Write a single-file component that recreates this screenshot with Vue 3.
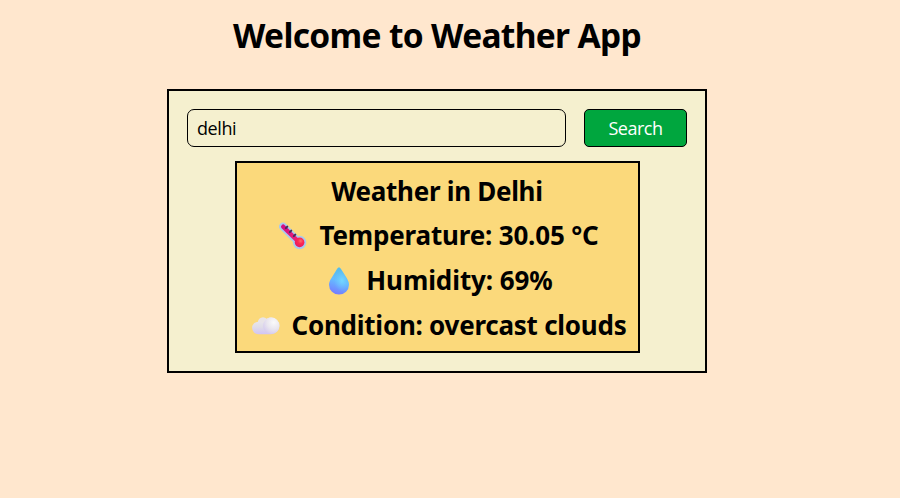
<script setup>
import { ref } from 'vue'

const city = ref('delhi')
</script>

<template>
  <main class="page">
    <h1 class="title">Welcome to Weather App</h1>
    <section class="card">
      <form class="search" @submit.prevent>
        <input v-model="city" class="field" type="text" aria-label="City" />
        <button class="button" type="submit">Search</button>
      </form>
      <div class="result">
        <h2 class="row heading"><span class="text">Weather in Delhi</span></h2>
        <h2 class="row reading temperature">
          <svg class="icon" viewBox="0 0 28 28">
            <defs>
              <linearGradient id="tube" x1="0" y1="0" x2="1" y2="1">
                <stop offset="0" stop-color="#d30f83" />
                <stop offset="1" stop-color="#ed2274" />
              </linearGradient>
              <radialGradient id="bulb" cx=".6" cy=".35" r=".7">
                <stop offset="0" stop-color="#ff6970" />
                <stop offset=".4" stop-color="#fc2951" />
                <stop offset="1" stop-color="#e51765" />
              </radialGradient>
            </defs>
            <path d="M4 4.6 L20 20.5" stroke="#a9c9ef" stroke-width="7.8" stroke-linecap="round" />
            <circle cx="20.6" cy="20.5" r="6.7" fill="#a9c9ef" />
            <path d="M4.2 4.7 L19 19.3" stroke="url(#tube)" stroke-width="4.4" stroke-linecap="round" />
            <circle cx="20.6" cy="20.4" r="4.8" fill="url(#bulb)" />
            <path d="M8.3 4.6 L6.8 6.1 M12.3 8.6 L10.8 10.1 M16.3 12.6 L14.8 14.1" stroke="#432f5c" stroke-width="2" stroke-linecap="round" />
          </svg>
          <span class="text">Temperature: 30.05 °C</span>
        </h2>
        <h2 class="row reading humidity">
          <svg class="icon" viewBox="0 0 28 28">
            <defs>
              <linearGradient id="drop" x1=".65" y1="0" x2=".4" y2="1">
                <stop offset="0" stop-color="#53bde9" />
                <stop offset=".5" stop-color="#65bcff" />
                <stop offset="1" stop-color="#757cff" />
              </linearGradient>
              <radialGradient id="shine" cx=".65" cy=".48" r=".4">
                <stop offset="0" stop-color="#78dcff" stop-opacity=".85" />
                <stop offset="1" stop-color="#70caff" stop-opacity="0" />
              </radialGradient>
            </defs>
            <path d="M14 .5 C13 .5 12.5 1.1 12 2 L6.2 11.5 C4.8 13.7 4 15.6 4 17.7 A10 9.8 0 0 0 24 17.7 C24 15.6 23.1 13.5 21.8 11.3 L16 2 C15.5 1.1 15 .5 14 .5Z" fill="url(#drop)" />
            <path d="M14 .5 C13 .5 12.5 1.1 12 2 L6.2 11.5 C4.8 13.7 4 15.6 4 17.7 A10 9.8 0 0 0 24 17.7 C24 15.6 23.1 13.5 21.8 11.3 L16 2 C15.5 1.1 15 .5 14 .5Z" fill="url(#shine)" />
          </svg>
          <span class="text">Humidity: 69%</span>
        </h2>
        <h2 class="row reading condition">
          <svg class="icon" viewBox="0 0 28 28">
            <defs>
              <linearGradient id="base" x1="0" y1="0" x2="0" y2="1">
                <stop offset="0" stop-color="#eeeaf0" />
                <stop offset=".55" stop-color="#e0dde8" />
                <stop offset="1" stop-color="#d1c4f5" />
              </linearGradient>
              <radialGradient id="puff" cx=".65" cy=".3" r=".75">
                <stop offset="0" stop-color="#fafafa" />
                <stop offset=".55" stop-color="#e9e6ef" />
                <stop offset="1" stop-color="#d5cbee" />
              </radialGradient>
            </defs>
            <circle cx="11" cy="10.5" r="5.2" fill="#e8e4e8" />
            <path d="M6.3 9.7 A6.1 6.1 0 0 0 6.5 22.3 H19 A8.3 8.3 0 0 0 19 5.6 C15.4 5.6 12.3 8 11.5 11.7 C10 10 8.2 9.5 6.3 9.7Z" fill="url(#base)" />
            <circle cx="19.3" cy="13.7" r="8.2" fill="url(#puff)" />
          </svg>
          <span class="text">Condition: overcast clouds</span>
        </h2>
      </div>
    </section>
  </main>
</template>

<style>
body {
  background: #ffe7ce;
}
</style>

<style scoped>
* {
  box-sizing: border-box;
}
.page {
  display: flex;
  flex-direction: column;
  align-items: center;
  width: 874px;
  height: 498px;
  font-family: "Noto Sans", "Open Sans", sans-serif;
  color: #000;
}
.title {
  margin: 11px 0 30px;
  font-size: 33.5px;
  font-weight: 700;
  line-height: 48px;
  letter-spacing: -0.68px;
  white-space: nowrap;
}
.card {
  display: flex;
  flex-direction: column;
  align-items: center;
  width: 540px;
  height: 284px;
  padding: 18px;
  border: 2px solid #000;
  background: #f5f0cf;
}
.search {
  display: flex;
  gap: 18px;
  width: 100%;
  margin-bottom: 14px;
}
.field {
  flex: 1;
  min-width: 0;
  height: 38px;
  padding: 0 9px;
  border: 1px solid #000;
  border-radius: 7px;
  outline: none;
  background: transparent;
  font: 18px "Open Sans", sans-serif;
  letter-spacing: -0.4px;
  color: #000;
}
.button {
  width: 103px;
  height: 38px;
  padding: 0;
  border: 1px solid #000;
  border-radius: 5px;
  background: #00a63e;
  font: 18px "Open Sans", sans-serif;
  letter-spacing: -0.5px;
  color: #fff;
}
.result {
  width: 405px;
  height: 192px;
  padding: 6px 0 0;
  border: 2px solid #000;
  background: #fbd97b;
}
.row {
  display: flex;
  align-items: center;
  justify-content: center;
  gap: 12px;
  height: 44.75px;
  margin: 0;
  font-size: 26px;
  font-weight: 700;
  line-height: 44px;
  letter-spacing: -0.25px;
  white-space: nowrap;
}
.reading {
  padding-left: 4px;
}
.reading .text {
  padding-bottom: 2px;
}
.heading {
  letter-spacing: -0.3px;
}
.temperature {
  letter-spacing: -0.18px;
}
.humidity {
  gap: 13px;
  letter-spacing: -0.08px;
}
.icon {
  flex: none;
  width: 28px;
  height: 28px;
  fill: none;
}
</style>
